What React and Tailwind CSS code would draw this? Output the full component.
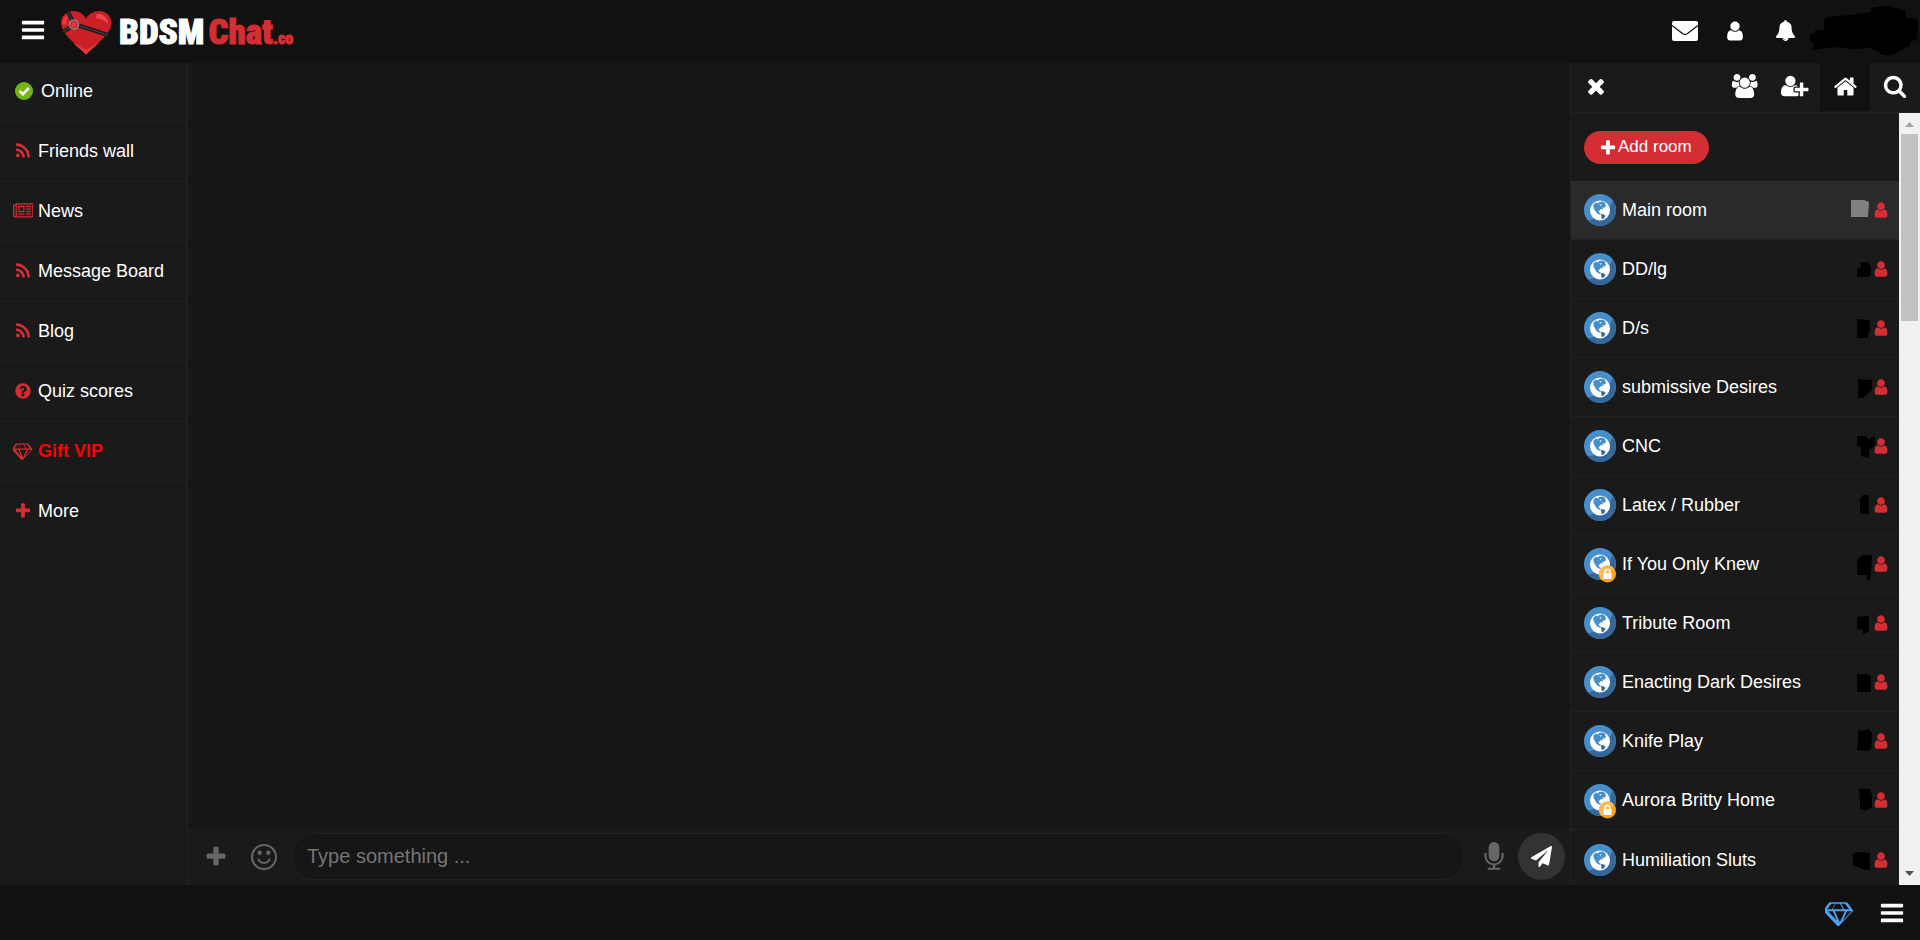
import { useState } from "react";

// icon name -> [viewBox width, path], all drawn on a 1792 high grid
const ICONS = {
    bars: [1792, "M1664 1344v128q0 26-19 45t-45 19h-1408q-26 0-45-19t-19-45v-128q0-26 19-45t45-19h1408q26 0 45 19t19 45zm0-512v128q0 26-19 45t-45 19h-1408q-26 0-45-19t-19-45v-128q0-26 19-45t45-19h1408q26 0 45 19t19 45zm0-512v128q0 26-19 45t-45 19h-1408q-26 0-45-19t-19-45v-128q0-26 19-45t45-19h1408q26 0 45 19t19 45z"],
    user: [1792, "M1536 1399q0 109-62.5 187t-150.5 78h-854q-88 0-150.5-78t-62.5-187q0-85 8.5-160.5t31.5-152 58.5-131 94-89 134.5-34.5q131 128 313 128t313-128q76 0 134.5 34.5t94 89 58.5 131 31.5 152 8.5 160.5zm-256-887q0 159-112.5 271.5t-271.5 112.5-271.5-112.5-112.5-271.5 112.5-271.5 271.5-112.5 271.5 112.5 112.5 271.5z"],
    bell: [1792, "M912 1696q0-16-16-16-59 0-101.5-42.5t-42.5-101.5q0-16-16-16t-16 16q0 73 51.5 124.5t124.5 51.5q16 0 16-16zm816-288q0 52-38 90t-90 38h-448q0 106-75 181t-181 75-181-75-75-181h-448q-52 0-90-38t-38-90q50-42 91-88t85-119.5 74.5-158.5 50-206 19.5-260q0-152 117-282.5t307-158.5q-8-19-8-39 0-40 28-68t68-28 68 28 28 68q0 20-8 39 190 28 307 158.5t117 282.5q0 139 19.5 260t50 206 74.5 158.5 85 119.5 91 88z"],
    home: [1792, "M1472 992v480q0 26-19 45t-45 19h-384v-384h-256v384h-384q-26 0-45-19t-19-45v-480q0-1 .5-3t.5-3l575-474 575 474q1 2 1 6zm223-69l-62 74q-8 9-21 11h-3q-13 0-21-7l-692-577-692 577q-12 8-24 7-13-2-21-11l-62-74q-8-10-7-23.5t11-21.5l719-599q32-26 76-26t76 26l244 204v-195q0-14 9-23t23-9h192q14 0 23 9t9 23v408l219 182q10 8 11 21.5t-7 23.5z"],
    search: [1792, "M1216 832q0-185-131.5-316.5t-316.5-131.5-316.5 131.5-131.5 316.5 131.5 316.5 316.5 131.5 316.5-131.5 131.5-316.5zm512 832q0 52-38 90t-90 38q-54 0-90-38l-343-342q-179 124-399 124-143 0-273.5-55.5t-225-150-150-225-55.5-273.5 55.5-273.5 150-225 225-150 273.5-55.5 273.5 55.5 225 150 150 225 55.5 273.5q0 220-124 399l343 343q37 37 37 90z"],
    plus: [1792, "M1600 736v192q0 40-28 68t-68 28h-416v416q0 40-28 68t-68 28h-192q-40 0-68-28t-28-68v-416h-416q-40 0-68-28t-28-68v-192q0-40 28-68t68-28h416v-416q0-40 28-68t68-28h192q40 0 68 28t28 68v416h416q40 0 68 28t28 68z"],
    times: [1792, "M1490 1322q0 40-28 68l-136 136q-28 28-68 28t-68-28l-294-294-294 294q-28 28-68 28t-68-28l-136-136q-28-28-28-68t28-68l294-294-294-294q-28-28-28-68t28-68l136-136q28-28 68-28t68 28l294 294 294-294q28-28 68-28t68 28l136 136q28 28 28 68t-28 68l-294 294 294 294q28 28 28 68z"],
    rss: [1792, "M576 1344q0 80-56 136t-136 56-136-56-56-136 56-136 136-56 136 56 56 136zm512 123q2 28-17 48-18 21-47 21h-135q-25 0-43-16.5t-20-41.5q-22-229-184.5-391.5t-391.5-184.5q-25-2-41.5-20t-16.5-43v-135q0-29 21-47 17-17 43-17h5q160 13 306 80.5t259 181.5q114 113 181.5 259t80.5 306zm512 2q2 27-18 47-18 20-46 20h-143q-26 0-44.5-17.5t-19.5-42.5q-12-215-101-408.5t-231.5-336-336-231.5-408.5-102q-25-1-42.5-19.5t-17.5-43.5v-143q0-28 20-46 18-18 44-18h3q262 13 501.5 120t425.5 294q187 186 294 425.5t120 501.5z"],
    question: [1792, "M1024 1376v-192q0-14-9-23t-23-9h-192q-14 0-23 9t-9 23v192q0 14 9 23t23 9h192q14 0 23-9t9-23zm256-672q0-88-55.5-163t-138.5-116-170-41q-243 0-371 213-15 24 8 42l132 100q7 6 19 6 16 0 25-12 53-68 86-92 34-24 86-24 48 0 85.5 26t37.5 59q0 38-20 61t-68 45q-63 28-115.5 86.5t-52.5 125.5v36q0 14 9 23t23 9h192q14 0 23-9t9-23q0-19 21.5-49.5t54.5-49.5q32-18 49-28.5t46-35 44.5-48 28-60.5 12.5-81zm384 192q0 209-103 385.5t-279.5 279.5-385.5 103-385.5-103-279.5-279.5-103-385.5 103-385.5 279.5-279.5 385.5-103 385.5 103 279.5 279.5 103 385.5z"],
    news: [2048, "M1024 512h-384v384h384v-384zm128 640v128h-640v-128h640zm0-768v640h-640v-640h640zm640 768v128h-512v-128h512zm0-256v128h-512v-128h512zm0-256v128h-512v-128h512zm0-256v128h-512v-128h512zm-1536 960v-960h-128v960q0 26 19 45t45 19 45-19 19-45zm1664 0v-1088h-1536v1088q0 33-11 64h1483q26 0 45-19t19-45zm128-1216v1216q0 80-56 136t-136 56h-1664q-80 0-136-56t-56-136v-1088h256v-128h1792z"],
    diamond: [2048, "M212 768l623 665-300-665h-323zm812 772l349-772h-698zm-538-900l204-384h-262l-288 384h346zm727 793l623-665h-323zm-683-793h708l-204-384h-300zm792 0h346l-288-384h-262zm212-461l384 512q14 18 13 41.5t-17 40.5l-960 1024q-18 20-47 20t-47-20l-960-1024q-16-17-17-40.5t13-41.5l384-512q18-26 51-26h1152q33 0 51 26z"],
    users: [2048, "M657 896q-162 5-265 128h-134q-82 0-138-40.5t-56-118.5q0-353 124-353 6 0 43.5 21t97.5 42.5 119 21.5q67 0 133-23-5 37-5 66 0 143 81 256zm1071 637q0 120-73 189.5t-194 69.5h-874q-121 0-194-69.5t-73-189.5q0-53 3.5-103.5t14-109 26.5-108.5 43-97.5 62-81 85.5-53.5 111.5-20q10 0 43 21.5t73 48 107 48 135 21.5 135-21.5 107-48 73-48 43-21.5q61 0 111.5 20t85.5 53.5 62 81 43 97.5 26.5 108.5 14 109 3.5 103.5zm-1024-1277q0 106-75 181t-181 75-181-75-75-181 75-181 181-75 181 75 75 181zm704 384q0 159-112.5 271.5t-271.5 112.5-271.5-112.5-112.5-271.5 112.5-271.5 271.5-112.5 271.5 112.5 112.5 271.5zm576 225q0 78-56 118.5t-138 40.5h-134q-103-123-265-128 81-113 81-256 0-29-5-66 66 23 133 23 59 0 119-21.5t97.5-42.5 43.5-21q124 0 124 353zm-128-609q0 106-75 181t-181 75-181-75-75-181 75-181 181-75 181 75 75 181z"],
    userPlus: [2048, "M704 896q-159 0-271.5-112.5t-112.5-271.5 112.5-271.5 271.5-112.5 271.5 112.5 112.5 271.5-112.5 271.5-271.5 112.5zm960 128h352q13 0 22.5 9.5t9.5 22.5v192q0 13-9.5 22.5t-22.5 9.5h-352v352q0 13-9.5 22.5t-22.5 9.5h-192q-13 0-22.5-9.5t-9.5-22.5v-352h-352q-13 0-22.5-9.5t-9.5-22.5v-192q0-13 9.5-22.5t22.5-9.5h352v-352q0-13 9.5-22.5t22.5-9.5h192q13 0 22.5 9.5t9.5 22.5v352zm-736 224q0 52 38 90t90 38h256v238q-68 50-171 50h-874q-121 0-194-69t-73-190q0-53 3.5-103.5t14-109 26.5-108.5 43-97.5 62-81 85.5-53.5 111.5-20q19 0 39 17 79 61 154.5 91.5t164.5 30.5 164.5-30.5 154.5-91.5q20-17 39-17 132 0 217 96h-223q-52 0-90 38t-38 90v192z"],
    plane: [1792, "M1764 11q33 24 27 64l-256 1536q-5 29-32 45-14 8-31 8-11 0-24-5l-453-185-242 295q-18 23-49 23-13 0-22-4-19-7-30.5-23.5t-11.5-36.5v-349l864-1059-1069 925-395-162q-37-14-40-55-2-40 32-59l1664-960q15-9 32-9 20 0 36 11z"],
    mic: [1792, "M1472 704v128q0 221-147.5 384.5t-364.5 187.5v132h256q26 0 45 19t19 45-19 45-45 19h-640q-26 0-45-19t-19-45 19-45 45-19h256v-132q-217-24-364.5-187.5t-147.5-384.5v-128q0-26 19-45t45-19 45 19 19 45v128q0 185 131.5 316.5t316.5 131.5 316.5-131.5 131.5-316.5v-128q0-26 19-45t45-19 45 19 19 45zm-256-384v512q0 132-94 226t-226 94-226-94-94-226v-512q0-132 94-226t226-94 226 94 94 226z"],
}

const menu = [
    {icon: "rss", label: "Friends wall"},
    {icon: "news", label: "News"},
    {icon: "rss", label: "Message Board"},
    {icon: "rss", label: "Blog"},
    {icon: "question", label: "Quiz scores"},
    {icon: "diamond", label: "Gift VIP", vip: true},
    {icon: "plus", label: "More"},
]

// mask is the scribble that hides the member count
const rooms = [
    {name: "Main room", mask: "1,2 14,2 19,4 18,19 1,19"},
    {name: "DD/lg", mask: "10,5 17,5 21,9 21,18 18,20 7,20 7,11 11,11"},
    {name: "D/s", mask: "7,3 20,4 20,16 18,17 18,22 7,22"},
    {name: "submissive Desires", mask: "8,4 22,5 22,15 13,23 8,23"},
    {name: "CNC", mask: "7,2 16,2 19,6 21,3 25,3 25,12 19,16 19,24 11,22 11,13 7,12"},
    {name: "Latex / Rubber", mask: "13,2 19,2 19,21 11,21 10,19 10,6"},
    {name: "If You Only Knew", locked: true, mask: "12,3 22,3 21,21 20,28 17,28 17,23 7,23 7,8"},
    {name: "Tribute Room", mask: "7,6 19,5 19,20 13,23 13,19 7,18"},
    {name: "Enacting Dark Desires", mask: "7,4 17,4 21,6 21,22 7,22"},
    {name: "Knife Play", mask: "8,2 19,0 22,4 21,20 18,22 7,21 8,12"},
    {name: "Aurora Britty Home", locked: true, mask: "9,1 20,1 22,8 22,19 16,23 10,21 10,13"},
    {name: "Humiliation Sluts", mask: "3,5 10,4 20,5 20,22 15,22 3,17"},
]

const Icon = ({name, className}) => (
    <svg viewBox={`0 0 ${ICONS[name][0]} 1792`} className={`w-auto shrink-0 fill-current ${className}`} aria-hidden="true">
        <path d={ICONS[name][1]} />
    </svg>
)

const Heart = () => (
    <svg viewBox="0 0 52 45" className="h-[45px] w-[52px] shrink-0" aria-hidden="true">
        <path d="M26 44.500C18 36 8 29 3 20C-2 10 4 1 13 1C19 1 24 4 26 9C28 4 34 1 40 1C49 2 54 10 50 19C45 29 34 36 26 44.500Z" fill="#cb2026" />
        <path d="M26 44.500C22 40.500 17 36.500 13 33C18 35 22 37.500 26 40C30 37.500 34 35 39 33C35 36.500 30 40.500 26 44.500Z" fill="#e8393f" />
        <path d="M37 4C44 4 48 8 48 14C45 10 41 9 36 8Z" fill="#ec4a50" />
        <path d="M2 14C3 8 6 5 9 4C7 8 6 11 6 15Z" fill="#e8393f" />
        <path d="M8 2L14 14M14 15L3 22M14 14L48 25" stroke="#1b1b1b" strokeWidth="4" fill="none" />
        <path d="M8 2L14 14M14 15L3 22M14 14L48 25" stroke="#4b4646" strokeWidth="1" fill="none" />
        <circle cx="14" cy="14.500" r="4.500" fill="#cb2026" stroke="#8d8585" strokeWidth="1.500" />
        <circle cx="14" cy="14.500" r="2.500" fill="#e8393f" />
    </svg>
)

const Envelope = () => (
    <svg viewBox="0 0 26 20" className="h-5 w-[26px]" aria-hidden="true">
        <rect width="26" height="20" rx="2" fill="#fff" />
        <path d="M0 4.500L10.500 12.500Q13 14.500 15.500 12.500L26 4.500" fill="none" stroke="#111" strokeWidth="1.300" />
    </svg>
)

const Smile = () => (
    <svg viewBox="0 0 26 26" className="size-[26px]" fill="none" stroke="currentColor" strokeWidth="2" aria-hidden="true">
        <circle cx="13" cy="13" r="12" />
        <path d="M7.500 15.500C9 20 17 20 18.500 15.500" strokeLinecap="round" />
        <circle cx="8.700" cy="8.700" r="2.200" fill="currentColor" stroke="none" />
        <circle cx="17.300" cy="8.700" r="2.200" fill="currentColor" stroke="none" />
    </svg>
)

const Check = () => (
    <svg viewBox="0 0 18 18" className="size-[18px] shrink-0" aria-hidden="true">
        <circle cx="9" cy="9" r="9" fill="#75b510" />
        <path d="M4.500 9L8 12.200L13.800 6" fill="none" stroke="#fff" strokeWidth="2.600" />
    </svg>
)

const RoomIcon = ({locked}) => (
    <svg viewBox="0 0 32 32" className="size-8 shrink-0 overflow-visible" aria-hidden="true">
        <circle cx="16" cy="16" r="16" fill="#478fcc" />
        <path d="M29 6.700A16 16 0 0 1 4 26.600L14 24L25 14Z" fill="#34689c" />
        <circle cx="16" cy="16.500" r="10" fill="#fff" />
        <path d="M9.500 10.500L12 8.500L14 9.500L15 8L19 7.500L21 9L22 12L20 14L18.500 13L19 15.500L17 15L14.500 17.500L15.500 19L17 20L16 21L12.500 19L10.500 15.500L9.500 14Z" fill="#478fcc" />
        <path d="M15.500 10L17.500 10.500L16.500 12Z" fill="#fff" />
        <path d="M17 20L20 20.500L21.500 22L19 25.200L17.500 24.500Z" fill="#34689c" />
        {locked && (
            <g>
                <circle cx="23.500" cy="26" r="8.500" fill="#ffa400" />
                <path d="M30 20.500A8.500 8.500 0 1 0 17.500 32Z" fill="#ffb950" />
                <rect x="19.500" y="25" width="8" height="6" rx="0.500" fill="#fff" />
                <path d="M21 25.500V24A2.500 2.500 0 0 1 26 24V25.500" fill="none" stroke="#fff" strokeWidth="1.500" />
            </g>
        )}
    </svg>
)

const Header = () => (
    <header className="flex h-[63px] shrink-0 items-center bg-[#111] text-white">
        <button aria-label="Menu" className="flex w-[60px] justify-center pr-0.5 pb-1 pl-2">
            <Icon name="bars" className="h-[26px]" />
        </button>
        <a href="#" className="flex items-center pt-0.5">
            <Heart />
            <span className="flex items-baseline gap-1 pl-[7px] font-['Roboto_Condensed',Roboto,sans-serif] text-[35px] leading-none font-black [-webkit-text-stroke:1px]">
                <span>BDSM</span>
                <span className="text-[#d42d34]">Chat<span className="text-base">.co</span></span>
            </span>
        </a>
        <nav className="ml-auto flex items-center pb-0.5">
            <button aria-label="Messages" className="flex w-[50px] justify-center"><Envelope /></button>
            <button aria-label="Friends" className="flex w-[50px] justify-center"><Icon name="user" className="h-[22px]" /></button>
            <button aria-label="Notifications" className="flex w-[50px] justify-center"><Icon name="bell" className="h-[21px]" /></button>
            <button aria-label="Profile" className="w-[110px]">
                <svg viewBox="0 0 110 50" className="h-[50px] w-[110px]" aria-hidden="true">
                    <path d="M0 28H5V24H14V14L18 11L41 9L61 6V2L78 0L96 5V12L108 13V23L107 34L101 35L100 40L91 44Q78 54 66 45L61 42L41 43L24 41L3 44V37H0Z" fill="#000" />
                </svg>
            </button>
        </nav>
    </header>
)

const Sidebar = () => (
    <aside className="w-[188px] shrink-0 border-r border-[#222] bg-[#1a1a1a] pr-px">
        <button className="flex h-[59px] w-full items-center gap-2 border-b border-[#222] pb-0.5 pl-[15px]">
            <Check />
            Online
        </button>
        {menu.map((item, i) => {
            const border = i < menu.length - 1 ? "border-b border-[#222]" : ""
            return (
                <a href="#" key={item.label} className={`flex h-[60px] items-center pb-0.5 pl-2.5 ${border}`}>
                    <span className="flex w-7 justify-center pr-0.5 text-[#d42d34]">
                        <Icon name={item.icon} className="h-[18px]" />
                    </span>
                    <span className={item.vip ? "font-bold text-[#f00]" : ""}>{item.label}</span>
                </a>
            )
        })}
    </aside>
)

const Chat = () => {
    const [text, setText] = useState("")

    return (
        <main className="flex min-w-0 grow flex-col bg-[#161616]">
            <div className="grow" />
            <form className="flex h-[57px] items-center bg-[#1a1a1a] pr-[5px] pl-1 text-[#666]" onSubmit={e => e.preventDefault()}>
                <button type="button" aria-label="Attach" className="flex w-12 justify-center"><Icon name="plus" className="h-6" /></button>
                <button type="button" aria-label="Emoticons" className="flex w-12 justify-center"><Smile /></button>
                <input
                    type="text"
                    aria-label="Message"
                    placeholder="Type something ..."
                    value={text}
                    onChange={e => setText(e.target.value)}
                    className="ml-[3px] h-[47px] min-w-0 grow rounded-full border border-[#222] bg-[#161616] px-[15px] text-xl text-white placeholder:text-[#757575]"
                />
                <button type="button" aria-label="Record" className="flex w-[53px] justify-center pl-1"><Icon name="mic" className="h-[30px]" /></button>
                <button aria-label="Send" className="flex size-[47px] items-center justify-center rounded-full bg-[#333] text-white">
                    <Icon name="plane" className="h-[21px]" />
                </button>
            </form>
        </main>
    )
}

const RoomRow = ({room, active, last}) => {
    const background = active ? "bg-[#2a2a2a]" : ""
    const border = last ? "" : "border-b border-[#222]"
    return (
        <li>
            <a href="#" className={`flex h-[59px] items-center pr-[9px] pl-[13px] ${background} ${border}`}>
                <RoomIcon locked={room.locked} />
                <span className="grow pl-1.5">{room.name}</span>
                <svg viewBox="0 0 22 24" className="h-6 w-[22px] overflow-visible" aria-hidden="true">
                    <polygon points={room.mask} className={active ? "fill-[#808080]" : "fill-black"} />
                </svg>
                <Icon name="user" className="h-[18px] text-[#d42d34]" />
            </a>
        </li>
    )
}

const RoomPanel = () => (
    <aside className="flex w-[350px] shrink-0 flex-col border-l border-[#222] bg-[#1a1a1a]">
        <div className="flex h-[50px] shrink-0 border-b border-[#222] text-white">
            <button aria-label="Close" className="flex h-12 w-[50px] items-center justify-center pb-0.5"><Icon name="times" className="h-6" /></button>
            <button aria-label="Users" className="ml-auto flex h-12 w-[50px] items-center justify-center pb-0.5"><Icon name="users" className="h-6" /></button>
            <button aria-label="Friends" className="flex h-12 w-[50px] items-center justify-center pb-0.5"><Icon name="userPlus" className="h-6" /></button>
            <button aria-label="Rooms" className="flex h-12 w-[50px] items-center justify-center bg-[#111] pb-0.5"><Icon name="home" className="h-[25px]" /></button>
            <button aria-label="Search" className="flex h-12 w-[50px] items-center justify-center pb-0.5"><Icon name="search" className="h-6" /></button>
        </div>
        <div className="flex min-h-0 grow">
            <div className="grow overflow-hidden">
                <button className="mt-[18px] mb-[17px] ml-[13px] flex h-[33px] items-center rounded-full bg-[#d42d34] pr-[17px] pl-[15px] text-[17px]">
                    <Icon name="plus" className="mr-px h-[18px]" />
                    Add room
                </button>
                <ul>
                    {rooms.map((room, i) => (
                        <RoomRow key={room.name} room={room} active={i === 0} last={i === rooms.length - 1} />
                    ))}
                </ul>
            </div>
            <div className="flex w-[21px] shrink-0 flex-col items-center bg-[#f1f1f1]">
                <svg viewBox="0 0 21 21" className="size-[21px] fill-[#a3a3a3]"><path d="M6 14L10.500 9L15 14Z" /></svg>
                <div className="h-[187px] w-[17px] bg-[#c1c1c1]" />
                <svg viewBox="0 0 21 21" className="mt-auto size-[21px] fill-[#505050]"><path d="M6 7L10.500 12L15 7Z" /></svg>
            </div>
        </div>
    </aside>
)

const App = () => (
    <div className="flex h-screen flex-col bg-[#111] font-['Liberation_Sans',Arial,sans-serif] text-lg text-white">
        <Header />
        <div className="flex min-h-0 grow">
            <Sidebar />
            <Chat />
            <RoomPanel />
        </div>
        <footer className="flex h-[55px] shrink-0 items-center justify-end pr-[15px]">
            <button aria-label="VIP" className="flex w-[50px] justify-center text-[#4ba3f0]"><Icon name="diamond" className="h-[26px]" /></button>
            <button aria-label="Options" className="ml-3.5 flex w-[26px] justify-center"><Icon name="bars" className="h-[26px]" /></button>
        </footer>
    </div>
)

export default App;
